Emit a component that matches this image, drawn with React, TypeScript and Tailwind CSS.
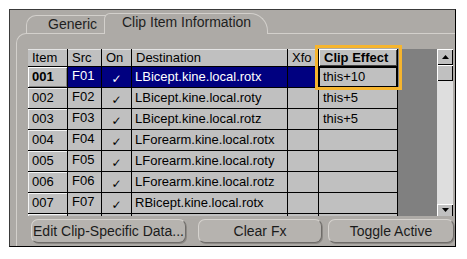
const ROWS = [
  ['001', 'F01', 'LBicept.kine.local.rotx', 'this+10'],
  ['002', 'F02', 'LBicept.kine.local.roty', 'this+5'],
  ['003', 'F03', 'LBicept.kine.local.rotz', 'this+5'],
  ['004', 'F04', 'LForearm.kine.local.rotx', ''],
  ['005', 'F05', 'LForearm.kine.local.roty', ''],
  ['006', 'F06', 'LForearm.kine.local.rotz', ''],
  ['007', 'F07', 'RBicept.kine.local.rotx', ''],
];

const raised = 'shadow-[inset_1px_1px_0_#fff,inset_-1px_-1px_0_#808080]';

function Header({ children }: { children: React.ReactNode }) {
  return <div className="bg-[#c0c0c0] pl-[4px] leading-[17px] shadow-[inset_0_1px_0_#e4e4e4]">{children}</div>;
}

function Arrow({ up }: { up?: boolean }) {
  return (
    <svg width="7" height="4" viewBox="0 0 7 4">
      <path d={up ? 'M0 4h7L3.5 0z' : 'M0 0h7L3.5 4z'} fill="#000" />
    </svg>
  );
}

function PanelButton({ label, w }: { label: string; w: string }) {
  return (
    <button
      className={`${w} h-[24px] rounded-[7px] border border-t-[#d6d3cf] border-l-[#d6d3cf] border-r-[#6f6c69] border-b-[#6f6c69] bg-[#b6b3af] text-[14px] leading-[20px] text-[#1b1b1b] shadow-[1px_1px_0_#8c8985]`}
    >
      {label}
    </button>
  );
}

export default function App() {
  return (
    <div className="h-[259px] w-[467px] bg-white pl-[9px] pt-[9px] font-['Liberation_Sans',Arial,sans-serif]">
      <div className="flex h-[238px] w-[447px] flex-col border border-b-black border-l-[#3a3a3a] border-r-black border-t-[#3a3a3a] bg-[#adaaa6]">
        {/* tabs */}
        <div className="flex h-[23px] items-end pl-[16px] text-[14px] text-[#1e1e1e]">
          <div className="h-[18px] w-[82px] rounded-tl-[10px] border-l border-t border-[#d3d0cc] pl-[21px] leading-[16px]">
            Generic
          </div>
          <div className="relative z-10 -mb-px -ml-[4px] h-[21px] w-[164px] rounded-tl-[6px] rounded-tr-[18px] border-l border-r border-t border-[#d3d0cc] bg-[#adaaa6] pl-[17px] leading-[16px]">
            Clip Item Information
          </div>
        </div>

        {/* content frame */}
        <div className="ml-[6px] flex flex-1 flex-col rounded-tl-[10px] border-l border-t border-[#d3d0cc] pl-[11px] pt-[15px]">
          <div className="relative flex h-[167px] w-[425px]">
            <div className="h-[167px] overflow-hidden">
              <div className="grid grid-cols-[39px_33px_29px_155px_30px_78px] grid-rows-[17px] auto-rows-[20px] gap-px border-r border-black bg-black text-[13px] text-black">
                <Header>Item</Header>
                <Header>Src</Header>
                <Header>On</Header>
                <Header>Destination</Header>
                <Header>Xfo</Header>
                <div className="bg-[#c0c0c0] pl-[5px] font-bold leading-[17px] shadow-[inset_1px_1px_0_#fff,inset_-1px_-1px_0_#404040]">
                  Clip Effect
                </div>
                {ROWS.map(([item, src, dest, fx], i) => {
                  const sel = i === 0;
                  const cell = sel ? 'bg-[#000080] text-white' : 'bg-[#c0c0c0]';
                  return [
                    <div
                      key={item + 'i'}
                      className={`bg-[#c0c0c0] pl-[4px] leading-[20px] ${sel ? `font-bold ${raised}` : 'shadow-[inset_1px_1px_0_#f4f4f4]'}`}
                    >
                      {item}
                    </div>,
                    <div key={item + 's'} className={`${cell} pl-[4px] leading-[18px]`}>{src}</div>,
                    <div key={item + 'o'} className={`${cell} flex items-end justify-center font-['DejaVu_Sans',sans-serif] text-[12px] leading-[16px]`}>
                      ✓
                    </div>,
                    <div key={item + 'd'} className={`${cell} pl-[3px] leading-[19px]`}>{dest}</div>,
                    <div key={item + 'x'} className={cell} />,
                    <div
                      key={item + 'f'}
                      className={`bg-[#c0c0c0] pl-[4px] leading-[19px] ${sel ? 'shadow-[inset_0_0_0_1px_#000]' : ''}`}
                    >
                      {fx}
                    </div>,
                  ];
                })}
                {/* partly hidden next row */}
                <div className="bg-[#c0c0c0] shadow-[inset_1px_1px_0_#f4f4f4]" />
                <div className="bg-[#c0c0c0]" />
                <div className="bg-[#c0c0c0]" />
                <div className="bg-[#c0c0c0]" />
                <div className="bg-[#c0c0c0]" />
                <div className="bg-[#c0c0c0]" />
              </div>
            </div>
            <div className="h-[167px] w-[39px] bg-[#808080]" />
            <div className="flex h-[167px] w-[16px] flex-col bg-[#dedede]">
              <div className="flex h-[16px] items-center justify-center bg-[#c0c0c0] shadow-[inset_1px_1px_0_#fff,inset_-1px_-1px_0_#000]">
                <Arrow up />
              </div>
              <div className="h-[16px] bg-[#c0c0c0] shadow-[inset_1px_1px_0_#fff,inset_-1px_-1px_0_#000]" />
              <div className="flex-1" />
              <div className="flex h-[12px] items-center justify-center bg-[#c0c0c0] shadow-[inset_1px_1px_0_#fff,inset_-1px_0_0_#000]">
                <Arrow />
              </div>
            </div>
            <div className="pointer-events-none absolute left-[287px] top-[-4px] h-[45px] w-[87px] border-[3px] border-[#f6b52e]" />
          </div>

          <div className="mt-[3px] flex gap-[12px] pl-[3px]">
            <PanelButton label="Edit Clip-Specific Data..." w="w-[155px]" />
            <div className="flex gap-[6px]">
              <PanelButton label="Clear Fx" w="w-[124px]" />
              <PanelButton label="Toggle Active" w="w-[126px]" />
            </div>
          </div>
        </div>
      </div>
    </div>
  );
}
